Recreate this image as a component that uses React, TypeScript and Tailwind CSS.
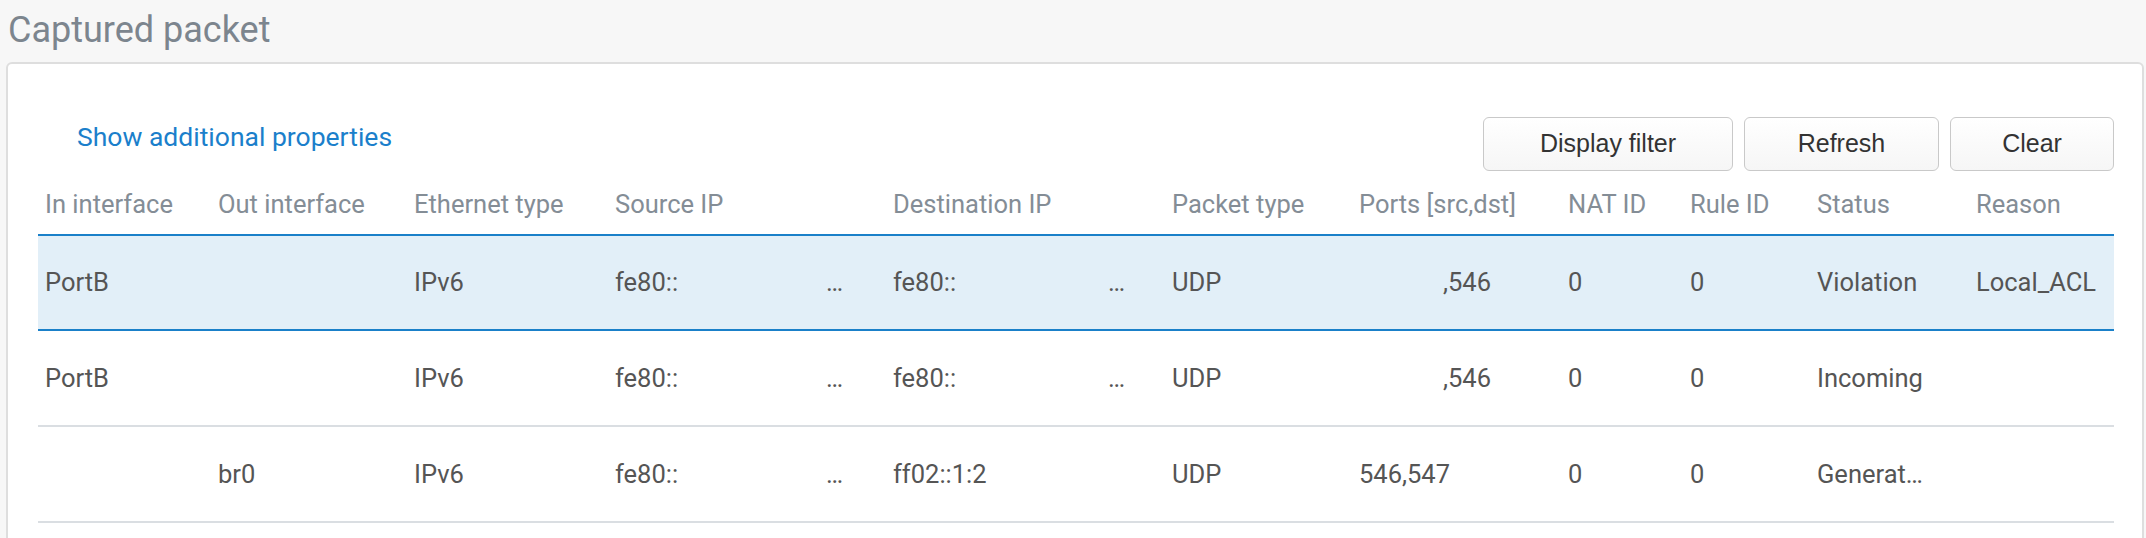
const cols = 'grid grid-cols-[173px_196px_201px_278px_279px_187px_209px_122px_127px_159px_145px]';

type Row = {
  inIf: string;
  outIf: string;
  eth: string;
  src: string;
  srcMore: boolean;
  dst: string;
  dstMore: boolean;
  proto: string;
  ports: string;
  portsRight: boolean;
  nat: string;
  rule: string;
  status: string;
  reason: string;
};

const rows: Row[] = [
  { inIf: 'PortB', outIf: '', eth: 'IPv6', src: 'fe80::', srcMore: true, dst: 'fe80::', dstMore: true, proto: 'UDP', ports: ',546', portsRight: true, nat: '0', rule: '0', status: 'Violation', reason: 'Local_ACL' },
  { inIf: 'PortB', outIf: '', eth: 'IPv6', src: 'fe80::', srcMore: true, dst: 'fe80::', dstMore: true, proto: 'UDP', ports: ',546', portsRight: true, nat: '0', rule: '0', status: 'Incoming', reason: '' },
  { inIf: '', outIf: 'br0', eth: 'IPv6', src: 'fe80::', srcMore: true, dst: 'ff02::1:2', dstMore: false, proto: 'UDP', ports: '546,547', portsRight: false, nat: '0', rule: '0', status: 'Generat…', reason: '' },
];

const headers = [
  'In interface',
  'Out interface',
  'Ethernet type',
  'Source IP',
  'Destination IP',
  'Packet type',
  'Ports [src,dst]',
  'NAT ID',
  'Rule ID',
  'Status',
  'Reason',
];

function Cell({ children, className = '' }: { children?: React.ReactNode; className?: string }) {
  return <div className={`flex items-center pl-[7px] whitespace-nowrap ${className}`}>{children}</div>;
}

function Button({ label, width }: { label: string; width: string }) {
  return (
    <button
      className={`${width} h-[54px] rounded-[6px] border-[1.5px] border-[#c9c9c9] bg-gradient-to-b from-white to-[#f6f6f6] text-[25px] text-[#333] font-['Liberation_Sans',Arial,sans-serif]`}
    >
      {label}
    </button>
  );
}

export default function App() {
  return (
    <div className="h-[538px] w-full overflow-hidden bg-[#f7f7f7] font-['Roboto',sans-serif]">
      {/* Title */}
      <div className="h-[62px] pt-[12px] pl-[8px]">
        <h1 className="text-[36px] leading-[36px] text-[#7c858e]">Captured packet</h1>
      </div>

      {/* Panel */}
      <div className="ml-[6px] mr-[2px] h-[600px] rounded-[6px] border-2 border-[#dedede] bg-white pt-[53px] pl-[30px] pr-[28px]">
        {/* Toolbar */}
        <div className="flex items-start justify-between">
          <a className="pt-[4px] pl-[39px] text-[26.5px] leading-[32px] text-[#1b7fcb]">Show additional properties</a>
          <div className="flex gap-[11px]">
            <Button label="Display filter" width="w-[250px]" />
            <Button label="Refresh" width="w-[195px]" />
            <Button label="Clear" width="w-[164px]" />
          </div>
        </div>

        {/* Table */}
        <div className="text-[25.5px]">
          <div className={`${cols} h-[65px] pt-[3px] border-b-2 border-[#dadee2] text-[#848d96]`}>
            {headers.map((h) => (
              <Cell key={h}>{h}</Cell>
            ))}
          </div>

          {rows.map((r, i) => (
            <div
              key={i}
              className={`${cols} text-[#555] ${
                i === 0
                  ? 'h-[97px] -mt-[2px] border-y-2 border-[#1a80c9] bg-[#e2eff8]'
                  : 'h-[96px] border-b-2 border-[#dadee2]'
              }`}
            >
              <Cell>{r.inIf}</Cell>
              <Cell>{r.outIf}</Cell>
              <Cell>{r.eth}</Cell>
              <Cell className="justify-between pr-[43px]">
                <span>{r.src}</span>
                {r.srcMore && <span>…</span>}
              </Cell>
              <Cell className="justify-between pr-[40px]">
                <span>{r.dst}</span>
                {r.dstMore && <span>…</span>}
              </Cell>
              <Cell>{r.proto}</Cell>
              <Cell className={r.portsRight ? 'justify-end pr-[70px]' : ''}>{r.ports}</Cell>
              <Cell>{r.nat}</Cell>
              <Cell>{r.rule}</Cell>
              <Cell>{r.status}</Cell>
              <Cell>{r.reason}</Cell>
            </div>
          ))}
        </div>
      </div>
    </div>
  );
}
